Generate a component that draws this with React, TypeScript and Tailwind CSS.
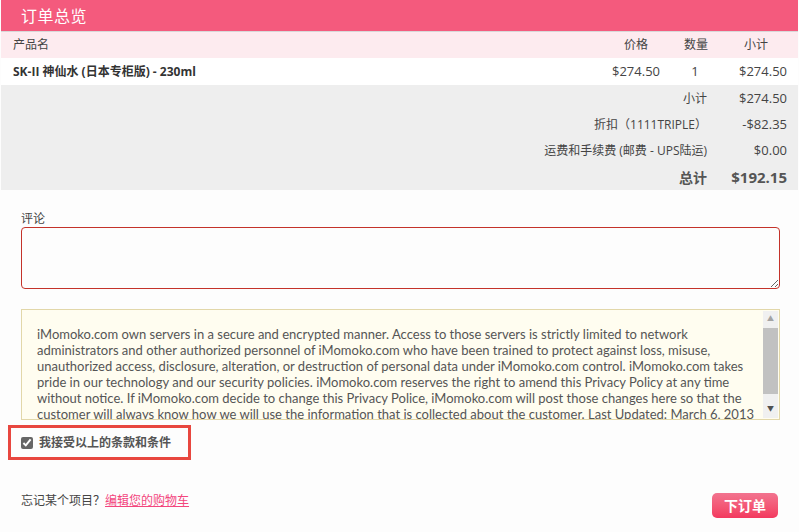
const cjk = "font-['Open_Sans','Noto_Sans_CJK_SC',sans-serif]";

const totals = [
  { label: "小计", value: "$274.50" },
  { label: "折扣（1111TRIPLE）", value: "-$82.35" },
  { label: "运费和手续费 (邮费 - UPS陆运)", value: "$0.00" },
];

const terms =
  "iMomoko.com own servers in a secure and encrypted manner. Access to those servers is strictly limited to network administrators and other authorized personnel of iMomoko.com who have been trained to protect against loss, misuse, unauthorized access, disclosure, alteration, or destruction of personal data under iMomoko.com control. iMomoko.com takes pride in our technology and our security policies. iMomoko.com reserves the right to amend this Privacy Policy at any time without notice. If iMomoko.com decide to change this Privacy Police, iMomoko.com will post those changes here so that the customer will always know how we will use the information that is collected about the customer. Last Updated: March 6, 2013";

export default function App() {
  return (
    <div className={`w-[799px] h-[532px] bg-[#fdfdfd] text-[#444] text-[12px] ${cjk}`}>
      {/* header */}
      <div className="mx-[1px] h-[32px] bg-[#f45a7d] border-b border-[#d8d8d8] flex items-center px-5 pt-[1px]">
        <h1 className="text-white text-[16px] leading-none tracking-[0.5px]">订单总览</h1>
      </div>

      {/* table head */}
      <div className="mx-[1px] h-[26px] bg-[#fdebef] flex items-center pl-3 pr-[30px]">
        <span className="flex-1">产品名</span>
        <span className="w-[60px] text-right">价格</span>
        <span className="w-[60px] text-right">数量</span>
        <span className="w-[60px] text-right">小计</span>
      </div>

      {/* product row */}
      <div className="mx-[1px] h-[27px] bg-white flex items-center pl-3 pr-[11px] text-[13px]">
        <span className="flex-1 font-bold text-[#333] text-[12px]">SK-II 神仙水 (日本专柜版) - 230ml</span>
        <span className="w-[60px] text-right">$274.50</span>
        <span className="w-[70px] text-center">1</span>
        <span className="w-[57px] text-right">$274.50</span>
      </div>

      {/* totals */}
      <div className="mx-[1px] h-[105px] bg-[#eeeeee] flex flex-col items-end pr-[11px] pt-[1px]">
        {totals.map((t) => (
          <div key={t.label} className="flex h-[26px] items-center">
            <span className="text-right">{t.label}</span>
            <span className="w-[80px] text-right text-[13px]">{t.value}</span>
          </div>
        ))}
        <div className="flex h-[26px] items-center font-bold text-[#555]">
          <span className="text-[14px]">总计</span>
          <span className="w-[80px] text-right text-[15px]">$192.15</span>
        </div>
      </div>

      {/* comments */}
      <div className="px-[21px] pt-[20px]">
        <label className="block leading-[17px]">评论</label>
        <textarea className="block w-[759px] h-[62px] border border-[#c4332a] rounded-[4px] bg-[#fdfdfd] resize-y" />

        <div className="mt-[20px] w-[759px] h-[111px] border border-[#e2d7a9] bg-[#fffdf0] flex">
          <div className="flex-1 pl-[15px] pt-[16px] pr-[2px] font-['Lato','Noto_Sans_CJK_SC',sans-serif] text-[13px] leading-[16px] text-[#555] overflow-hidden">
            {terms}
          </div>
          <div className="w-[15px] my-[1px] mr-[1px] bg-[#f0f0f0] flex flex-col items-center">
            <span className="h-[17px] flex items-center text-[7px] text-[#a3a3a3]">▲</span>
            <div className="w-[15px] h-[66px] bg-[#c1c1c1]" />
            <div className="flex-1" />
            <span className="h-[17px] flex items-center text-[7px] text-[#505050]">▼</span>
          </div>
        </div>
      </div>

      {/* accept */}
      <div className="ml-[8px] mt-[5px] w-[183px] h-[35px] border-[3px] border-[#e8473f] flex items-center pl-[10px] gap-[6px]">
        <input type="checkbox" defaultChecked className="w-[12px] h-[12px] accent-[#666]" />
        <span className="font-bold text-[#555]">我接受以上的条款和条件</span>
      </div>

      {/* footer */}
      <div className="px-[21px] mt-[33px] flex items-start justify-between">
        <span className="leading-[16px]">
          忘记某个项目？
          <a className="text-[#f3467d] underline">编辑您的购物车</a>
        </span>
        <button className="w-[66px] h-[25px] rounded-[5px] bg-gradient-to-b from-[#f2738f] to-[#f3385f] text-white font-bold text-[14px]">
          下订单
        </button>
      </div>
    </div>
  );
}
